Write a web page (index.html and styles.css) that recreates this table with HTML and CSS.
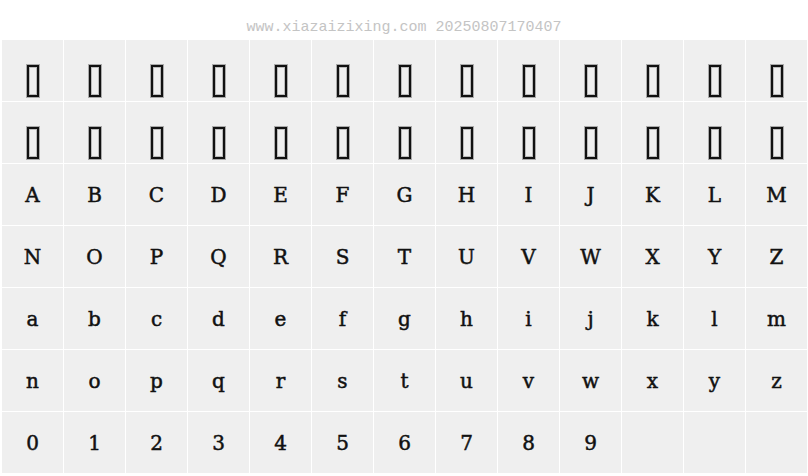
FILE: index.html
```html
<!DOCTYPE html>
<html>
<head>
<meta charset="utf-8">
<link rel="stylesheet" href="styles.css">
</head>
<body>
<div class="header">www.xiazaizixing.com 20250807170407</div>
<div class="grid">
  <div class="cell tofu"><span class="box"></span></div>
  <div class="cell tofu"><span class="box"></span></div>
  <div class="cell tofu"><span class="box"></span></div>
  <div class="cell tofu"><span class="box"></span></div>
  <div class="cell tofu"><span class="box"></span></div>
  <div class="cell tofu"><span class="box"></span></div>
  <div class="cell tofu"><span class="box"></span></div>
  <div class="cell tofu"><span class="box"></span></div>
  <div class="cell tofu"><span class="box"></span></div>
  <div class="cell tofu"><span class="box"></span></div>
  <div class="cell tofu"><span class="box"></span></div>
  <div class="cell tofu"><span class="box"></span></div>
  <div class="cell tofu"><span class="box"></span></div>
  <div class="cell tofu"><span class="box"></span></div>
  <div class="cell tofu"><span class="box"></span></div>
  <div class="cell tofu"><span class="box"></span></div>
  <div class="cell tofu"><span class="box"></span></div>
  <div class="cell tofu"><span class="box"></span></div>
  <div class="cell tofu"><span class="box"></span></div>
  <div class="cell tofu"><span class="box"></span></div>
  <div class="cell tofu"><span class="box"></span></div>
  <div class="cell tofu"><span class="box"></span></div>
  <div class="cell tofu"><span class="box"></span></div>
  <div class="cell tofu"><span class="box"></span></div>
  <div class="cell tofu"><span class="box"></span></div>
  <div class="cell tofu"><span class="box"></span></div>
  <div class="cell">A</div><div class="cell">B</div><div class="cell">C</div><div class="cell">D</div><div class="cell">E</div><div class="cell">F</div><div class="cell">G</div><div class="cell">H</div><div class="cell">I</div><div class="cell">J</div><div class="cell">K</div><div class="cell">L</div><div class="cell">M</div>
  <div class="cell">N</div><div class="cell">O</div><div class="cell">P</div><div class="cell">Q</div><div class="cell">R</div><div class="cell">S</div><div class="cell">T</div><div class="cell">U</div><div class="cell">V</div><div class="cell">W</div><div class="cell">X</div><div class="cell">Y</div><div class="cell">Z</div>
  <div class="cell">a</div><div class="cell">b</div><div class="cell">c</div><div class="cell">d</div><div class="cell">e</div><div class="cell">f</div><div class="cell">g</div><div class="cell">h</div><div class="cell">i</div><div class="cell">j</div><div class="cell">k</div><div class="cell">l</div><div class="cell">m</div>
  <div class="cell">n</div><div class="cell">o</div><div class="cell">p</div><div class="cell">q</div><div class="cell">r</div><div class="cell">s</div><div class="cell">t</div><div class="cell">u</div><div class="cell">v</div><div class="cell">w</div><div class="cell">x</div><div class="cell">y</div><div class="cell">z</div>
  <div class="cell">0</div><div class="cell">1</div><div class="cell">2</div><div class="cell">3</div><div class="cell">4</div><div class="cell">5</div><div class="cell">6</div><div class="cell">7</div><div class="cell">8</div><div class="cell">9</div><div class="cell"></div><div class="cell"></div><div class="cell"></div>
</div>
</body>
</html>
```
FILE: styles.css
```css
html, body {
  margin: 0;
  padding: 0;
  background: #ffffff;
}
.header {
  height: 40px;
  box-sizing: border-box;
  padding-top: 19px;
  text-align: center;
  font-family: "Liberation Mono", "DejaVu Sans Mono", monospace;
  font-size: 15px;
  line-height: 17px;
  color: #c4c4c4;
}
.grid {
  display: grid;
  grid-template-columns: repeat(13, 61px);
  grid-auto-rows: 61px;
  gap: 1px;
  padding-left: 2px;
}
.cell {
  background: #efefef;
  display: flex;
  align-items: center;
  justify-content: center;
  font-family: "DejaVu Serif", "Liberation Serif", serif;
  font-size: 20px;
  color: #111;
  -webkit-text-stroke: 0.5px #111;
  box-sizing: border-box;
}
.tofu {
  align-items: flex-end;
  padding-bottom: 4px;
}
.box {
  display: block;
  width: 12px;
  height: 32px;
  box-sizing: border-box;
  border: 2px solid #111;
  box-shadow: 0 0 0 1px #aaa, inset 0 0 0 1px #bbb;
}
```
